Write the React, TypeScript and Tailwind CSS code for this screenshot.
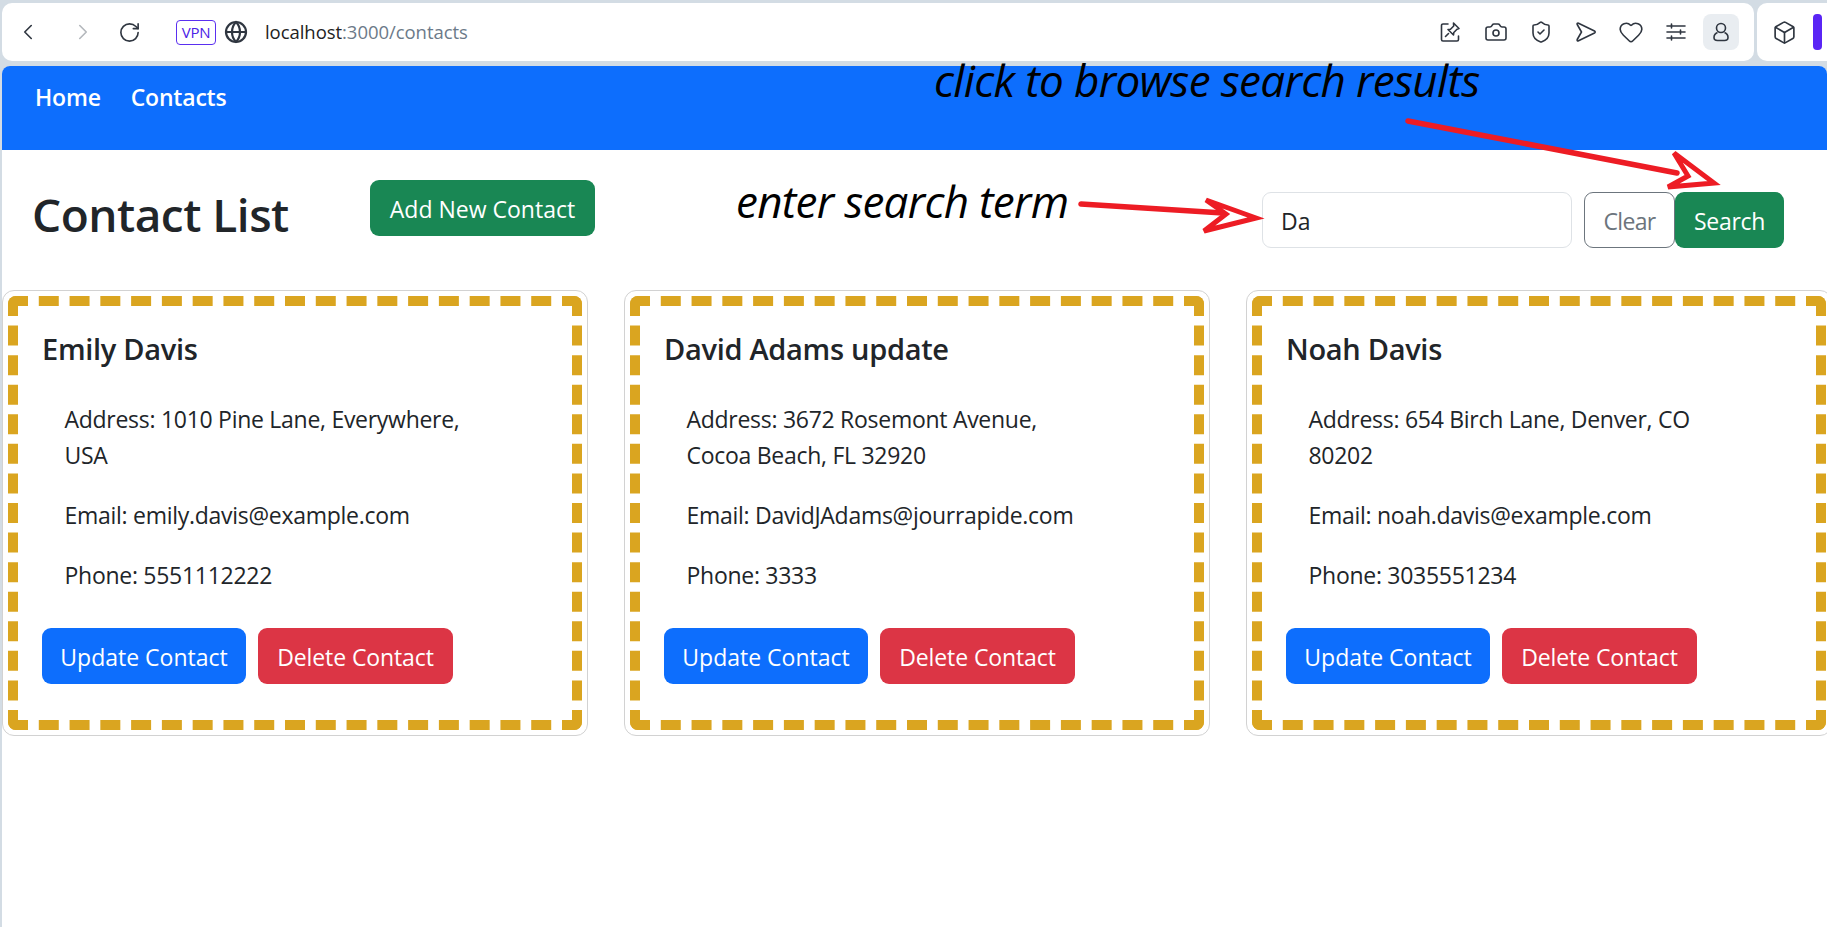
import { ChevronLeft, ChevronRight, RotateCw, Globe, Camera, ShieldCheck, Heart, Box } from "lucide-react";

const font = "[font-family:'Open_Sans','Noto_Sans',sans-serif]";

const contacts = [
  { name: "Emily Davis", address: ["Address: 1010 Pine Lane, Everywhere,", "USA"], email: "Email: emily.davis@example.com", phone: "Phone: 5551112222" },
  { name: "David Adams update", address: ["Address: 3672 Rosemont Avenue,", "Cocoa Beach, FL 32920"], email: "Email: DavidJAdams@jourrapide.com", phone: "Phone: 3333" },
  { name: "Noah Davis", address: ["Address: 654 Birch Lane, Denver, CO", "80202"], email: "Email: noah.davis@example.com", phone: "Phone: 3035551234" },
];

function Toolbar() {
  return (
    <div className="flex h-[66px] items-start gap-[3px] pt-[3px]">
      <div className="ml-[2px] flex h-[58px] w-[1752px] items-center rounded-[10px] bg-white text-[#2f3640]">
        <div className="flex w-[174px] items-center">
          <ChevronLeft size={26} strokeWidth={1.5} className="ml-[13px]" />
          <ChevronRight size={26} strokeWidth={1.5} className="ml-[29px] text-[#b4b8bc]" />
          <RotateCw size={23} strokeWidth={1.7} className="ml-[22px]" />
        </div>
        <div className="flex h-[25px] w-[40px] items-center justify-center rounded-[4px] border border-[#5a2ff0] text-[15px] tracking-[-0.2px] text-[#4b22e6]">VPN</div>
        <Globe size={24} strokeWidth={2.2} className="ml-[8px]" />
        <div className="ml-[17px] text-[18.5px] tracking-[-0.05px] text-[#222]">
          localhost<span className="text-[#6c7a89]">:3000/contacts</span>
        </div>
        <div className="ml-auto mr-[15px] flex items-center">
          <svg width="24" height="24" viewBox="0 0 24 24" fill="none" stroke="currentColor" strokeWidth="1.6" strokeLinecap="round" strokeLinejoin="round" className="mr-[22px]">
            <path d="M10 4H5a1.500 1.500 0 0 0-1.500 1.500v14A1.500 1.500 0 0 0 5 21h14a1.500 1.500 0 0 0 1.500-1.500V16" />
            <path d="M15.500 3l5.500 5.500-2 .8-3.200 3.200-.3 2.500-5.500-5.500 2.500-.3 3.200-3.200z" />
            <path d="M10.500 13.500L7.500 16.500" />
          </svg>
          <Camera size={24} strokeWidth={1.6} className="mr-[21px]" />
          <ShieldCheck size={24} strokeWidth={1.6} className="mr-[21px]" />
          <svg width="24" height="24" viewBox="0 0 24 24" fill="none" stroke="currentColor" strokeWidth="1.6" strokeLinejoin="round" className="mr-[20px]">
            <path d="M4.500 3.200L20.500 11c.9.500.9 1.500 0 2L4.500 20.800c-1 .4-1.800-.5-1.300-1.300L7.500 12 3.200 4.500c-.5-.8.300-1.700 1.300-1.300z" />
          </svg>
          <Heart size={26} strokeWidth={1.5} className="mr-[20px]" />
          <svg width="24" height="24" viewBox="0 0 24 24" fill="none" stroke="currentColor" strokeWidth="1.6" strokeLinecap="round" className="mr-[15px]">
            <path d="M3 6h18M3 12h18M3 18h18" />
            <path d="M7.500 4v4M16.500 10v4M7.500 16v4" />
          </svg>
          <div className="flex h-[36px] w-[36px] items-center justify-center rounded-[8px] bg-[#e9edf1]">
            <svg width="24" height="24" viewBox="0 0 24 24" fill="none" stroke="currentColor" strokeWidth="1.600">
              <circle cx="12" cy="8" r="4.500" />
              <path d="M8.500 12.500C6 13.500 5 15.500 5 17.500 5 19.500 6.500 20.500 8.500 20.500h7c2 0 3.500-1 3.500-3 0-2-1-4-3.500-5" />
            </svg>
          </div>
        </div>
      </div>
      <div className="flex h-[58px] flex-1 items-center rounded-l-[10px] bg-white text-[#2f3640]">
        <Box size={25} strokeWidth={1.6} className="ml-[15px]" />
        <div className="ml-[16px] h-[36px] w-[9px] rounded-[4px] bg-[#5a25f5]" />
      </div>
    </div>
  );
}

function Card({ c }: { c: (typeof contacts)[number] }) {
  return (
    <div className="h-[446px] w-[586px] shrink-0 rounded-[12px] border border-[#d2d2d2] bg-white p-[5px]">
      <div className="h-[434px] rounded-[8px] border-[10px] border-dashed border-[#daa520] px-[24px] pt-[25px]">
        <h5 className="text-[29px] leading-[36px] font-semibold tracking-[-0.3px] text-[#212529]">{c.name}</h5>
        <div className="mt-[34px] pl-[22.500px] text-[23px] leading-[36px] tracking-[-0.28px] text-[#212529]">
          <p>{c.address[0]}<br />{c.address[1]}</p>
          <p className="mt-[24px]">{c.email}</p>
          <p className="mt-[24px]">{c.phone}</p>
        </div>
        <div className="mt-[35px] flex gap-[12px] text-[23px] text-white">
          <button className="flex h-[56px] w-[204px] items-center justify-center rounded-[9px] bg-[#0d6efd] pt-[2px]">Update Contact</button>
          <button className="flex h-[56px] w-[195px] items-center justify-center rounded-[9px] bg-[#dc3545] pt-[2px] tracking-[-0.1px]">Delete Contact</button>
        </div>
      </div>
    </div>
  );
}

export default function App() {
  return (
    <div className={`relative h-[927px] w-[1827px] overflow-hidden bg-[#d3dce4] ${font}`}>
      <Toolbar />
      <div className="ml-[2px] h-[861px] rounded-t-[8px] bg-white">
        <nav className="flex h-[84px] gap-[30px] rounded-t-[8px] bg-[#0d6efd] pl-[33px] pt-[13px] text-[23px] leading-[36px] font-semibold tracking-[-0.2px] text-white">
          <a>Home</a>
          <a>Contacts</a>
        </nav>
        <div className="flex h-[140px] items-start">
          <h1 className="ml-[30px] mt-[36px] w-[338px] text-[46px] leading-[56px] font-semibold tracking-[-0.5px] text-[#212529]">Contact List</h1>
          <button className="mt-[30px] flex h-[56px] w-[225px] items-center justify-center rounded-[9px] bg-[#198754] pt-[2px] text-[23px] text-white">Add New Contact</button>
          <div className="ml-[667px] mt-[42px] flex">
            <div className="flex h-[56px] w-[310px] items-center rounded-[9px] border border-[#dee2e6] pl-[18px] pt-[2px] text-[23px] text-[#212529]">Da</div>
            <button className="ml-[12px] h-[56px] w-[91px] rounded-[9px] border border-[#6c757d] pt-[2px] text-[23px] tracking-[-0.7px] text-[#6c757d]">Clear</button>
            <button className="h-[56px] w-[109px] rounded-[9px] bg-[#198754] pt-[2px] text-[23px] tracking-[-0.3px] text-white">Search</button>
          </div>
        </div>
        <div className="flex gap-[36px]">
          {contacts.map((c) => (
            <Card key={c.name} c={c} />
          ))}
        </div>
      </div>

      <div className="absolute left-[934px] top-[52px] text-[44px] leading-[56px] italic tracking-[-0.65px] whitespace-nowrap text-black">click to browse search results</div>
      <div className="absolute left-[736px] top-[173px] text-[44px] leading-[56px] italic tracking-[-0.72px] whitespace-nowrap text-black">enter search term</div>

      <svg className="absolute left-0 top-0" width="1827" height="927" fill="none" stroke="#ed1c24" strokeLinejoin="miter">
        <path d="M1408 121L1677 173" strokeWidth="5.500" strokeLinecap="round" />
        <path d="M1674 153L1714 183 1668 187 1688 176Z" strokeWidth="5" />
        <path d="M1081 204L1223 213" strokeWidth="5.500" strokeLinecap="round" />
        <path d="M1206 200L1256 218 1204 231 1226 214Z" strokeWidth="5" />
      </svg>
    </div>
  );
}
